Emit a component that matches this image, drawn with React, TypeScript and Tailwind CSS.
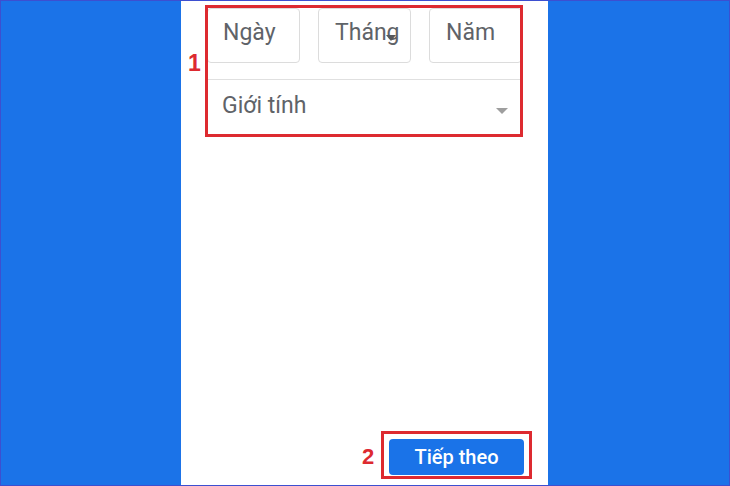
import React from "react";

export default function App() {
  return (
    <div
      className="w-[730px] h-[486px] border border-[#3d4fd0] bg-[#1b73e8] pl-[180px]"
      style={{ fontFamily: "Roboto, 'Noto Sans', sans-serif" }}
    >
      <div className="relative w-[367px] h-full bg-white flex flex-col">
        {/* date row */}
        <div className="flex gap-[18px] pl-[26px] pt-[7px]">
          <div className="w-[93px] h-[55px] border border-[#dcdcdc] rounded-[4px] pl-[15px] pt-[12px] text-[23px] leading-none text-[#5f6368]">
            Ngày
          </div>
          <div className="relative w-[93px] h-[55px] border border-[#dcdcdc] rounded-[4px] pl-[16px] pt-[12px] text-[23px] leading-none text-[#5f6368]">
            Tháng
            <div className="absolute left-[67px] top-[26px] w-0 h-0 border-l-[5px] border-r-[5px] border-t-[6px] border-l-transparent border-r-transparent border-t-[#55585c]" />
          </div>
          <div className="w-[93px] h-[55px] border border-[#dcdcdc] rounded-[4px] pl-[16px] pt-[12px] text-[23px] leading-none text-[#5f6368]">
            Năm
          </div>
        </div>

        {/* gender select */}
        <div className="ml-[26px] mt-[16px] w-[315px] h-[60px] border-t border-[#e0e0e0] relative pl-[15px] pt-[14px] text-[23px] leading-none text-[#5f6368]">
          Giới tính
          <div className="absolute left-[289px] top-[28px] w-0 h-0 border-l-[6px] border-r-[6px] border-t-[6px] border-l-transparent border-r-transparent border-t-[#9e9e9e]" />
        </div>

        <div className="flex-1" />

        <div className="self-end mr-[24px] mb-[10px]">
          <button className="w-[135px] h-[36px] rounded-[4px] bg-[#1a73e8] text-white text-[20px] font-medium flex items-center justify-center">
            Tiếp theo
          </button>
        </div>

        {/* annotations */}
        <div className="absolute left-[24px] top-[4px] w-[318px] h-[132px] border-[3px] border-[#dd2a30]" />
        <div
          className="absolute left-[7px] top-[51px] text-[23px] font-bold leading-none text-[#dd2a30]"
          style={{ fontFamily: "'Liberation Sans', Arial, sans-serif" }}
        >
          1
        </div>
        <div className="absolute left-[200px] top-[430px] w-[151px] h-[48px] border-[3px] border-[#dd2a30]" />
        <div
          className="absolute left-[181px] top-[445px] text-[22px] font-bold leading-none text-[#dd2a30]"
          style={{ fontFamily: "'Liberation Sans', Arial, sans-serif" }}
        >
          2
        </div>
      </div>
    </div>
  );
}
